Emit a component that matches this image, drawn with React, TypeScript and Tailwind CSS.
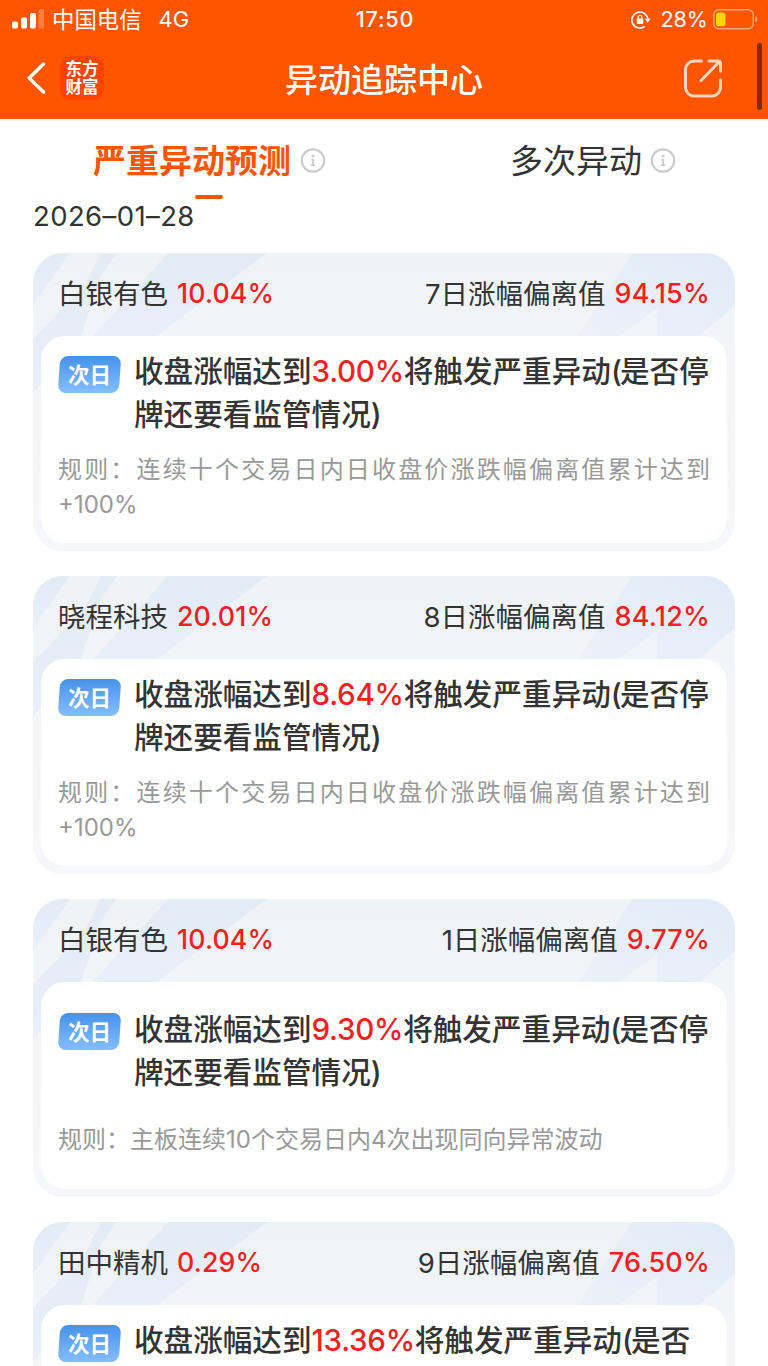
import React from 'react'

interface Alert {
  name: string
  change: string
  days: number
  deviation: string
  trigger: string
  rule: string
  spacious?: boolean
}

const longRule = '规则：连续十个交易日内日收盘价涨跌幅偏离值累计达到+100%'

const alerts: Alert[] = [
  { name: '白银有色', change: '10.04%', days: 7, deviation: '94.15%', trigger: '3.00%', rule: longRule },
  { name: '晓程科技', change: '20.01%', days: 8, deviation: '84.12%', trigger: '8.64%', rule: longRule },
  {
    name: '白银有色',
    change: '10.04%',
    days: 1,
    deviation: '9.77%',
    trigger: '9.30%',
    rule: '规则：主板连续10个交易日内4次出现同向异常波动',
    spacious: true,
  },
  { name: '田中精机', change: '0.29%', days: 9, deviation: '76.50%', trigger: '13.36%', rule: longRule },
]

const StatusBar: React.FC = () => (
  <div className="flex h-[39px] items-center justify-between pl-3 pr-[10px]">
    <div className="flex w-[300px] items-center">
      <svg width="32" height="20" viewBox="0 0 32 20" fill="#fff">
        <rect x="0" y="12.500" width="6" height="7" rx="1.8" />
        <rect x="9" y="8.500" width="6" height="11" rx="1.8" />
        <rect x="18" y="4" width="6" height="15.500" rx="1.8" />
        <rect x="26.500" y="0" width="5.500" height="19.500" rx="1.800" fillOpacity="0.25" />
      </svg>
      <span className="ml-2 text-[22.400px]">中国电信</span>
      <span className="ml-[17px] text-[22px]">4G</span>
    </div>
    <span className="text-[21.500px] font-medium tracking-[0.9px]">17:50</span>
    <div className="flex w-[300px] items-center justify-end">
      <svg width="20" height="18" viewBox="0 0 20 18" fill="none" stroke="#fff" strokeWidth="1.600">
        <path d="M13.600 15.500A8 8 0 1 1 16.800 8" />
        <path d="M13.600 7.800h6l-3 4z" fill="#fff" stroke="none" />
        <rect x="5.800" y="7.600" width="6.400" height="5.400" rx="0.800" fill="#fff" stroke="none" />
        <path d="M7.100 8V6.200a1.900 1.900 0 0 1 3.800 0V8" strokeWidth="1.200" />
      </svg>
      <span className="ml-[9px] text-[21.500px]">28%</span>
      <svg className="ml-[5px]" width="45" height="22" viewBox="0 0 45 22">
        <rect x="0.800" y="0.800" width="39.500" height="19" rx="5" fill="none" stroke="#fff" strokeOpacity="0.45" strokeWidth="1.500" />
        <rect x="3" y="3.500" width="9.500" height="13.800" rx="2.500" fill="#ffd60a" />
        <path d="M42.300 7c2.600 1 2.600 5.600 0 6.600z" fill="#fff" fillOpacity="0.5" />
      </svg>
    </div>
  </div>
)

const TitleBar: React.FC = () => (
  <div className="flex h-[80px] items-center justify-between pb-[2px] pl-[27px] pr-[46px]">
    <div className="flex w-[180px] items-center">
      <svg width="19" height="32" viewBox="0 0 19 32" fill="none" stroke="#fff" strokeWidth="3.400" strokeLinecap="round" strokeLinejoin="round">
        <path d="M16.500 2L2.200 16l14.300 14" />
      </svg>
      <div className="ml-[14px] flex h-11 w-11 flex-col items-center justify-center rounded-[10px] bg-[#ff4400] text-[16.500px] font-bold leading-[18px]">
        <span>东方</span>
        <span>财富</span>
      </div>
    </div>
    <h1 className="pt-[4px] text-[33px] font-medium leading-none">异动追踪中心</h1>
    <div className="flex w-[161px] justify-end">
      <svg width="40" height="40" viewBox="0 0 40 40" fill="none" stroke="#ffd5c2" strokeWidth="3" strokeLinecap="round" strokeLinejoin="round">
        <path d="M19.500 3H12a8.500 8.500 0 0 0-8.500 8.500v18A8.500 8.500 0 0 0 12 38h18a8.500 8.500 0 0 0 8.500-8.500V22" />
        <path d="M27 3h9a2.500 2.500 0 0 1 2.500 2.500V13M37 4L19 22.500" />
      </svg>
    </div>
  </div>
)

const InfoIcon: React.FC = () => (
  <svg width="26" height="26" viewBox="0 0 26 26" fill="none" stroke="#ccc">
    <circle cx="13" cy="13.500" r="11.200" strokeWidth="2.200" />
    <circle cx="13" cy="9" r="1.500" fill="#ccc" stroke="none" />
    <path d="M13 12v6M11 18.200h4M11.500 12.500H13" strokeWidth="1.800" />
  </svg>
)

const CardBackdrop: React.FC = () => (
  <svg className="absolute left-0 top-0" width="702" height="160" viewBox="0 0 702 160">
    <defs>
      <linearGradient id="stripe" x1="0" y1="0" x2="0" y2="1">
        <stop offset="0" stopColor="#e3ebf5" />
        <stop offset="1" stopColor="#e8eff8" />
      </linearGradient>
      <linearGradient id="corner" x1="0" y1="1" x2="1" y2="0">
        <stop offset="0" stopColor="#ecf1f8" />
        <stop offset="1" stopColor="#e1ebf8" />
      </linearGradient>
    </defs>
    <path d="M0 0H37L0 52z" fill="url(#stripe)" />
    <path d="M68 0H84L67 24L48 83L0 140V86L52 32z" fill="url(#stripe)" />
    <path d="M135 0H234L124 83H60z" fill="url(#stripe)" />
    <path d="M599 0H702V52L666 83H624V55L586 83H545z" fill="url(#corner)" />
  </svg>
)

const AlertCard: React.FC<{ alert: Alert }> = ({ alert }) => (
  <section className="relative h-[298px] shrink-0 overflow-hidden rounded-[30px] bg-gradient-to-b from-[#eff3f7] to-[#f6f7fb] px-2 pb-2">
    <CardBackdrop />
    <div className="relative flex h-[83px] items-center justify-between px-[17px] text-[27.500px] text-[#333]">
      <div className="flex items-center">
        <span>{alert.name}</span>
        <span className="mb-[2px] ml-[9px] text-[26.700px] font-medium tracking-[0.150px] text-[#fa1e1e]">{alert.change}</span>
      </div>
      <div className="flex items-center">
        <span>{alert.days}日涨幅偏离值</span>
        <span className="mb-px ml-[9px] text-[27px] font-medium tracking-[0.2px] text-[#fa1e1e]">{alert.deviation}</span>
      </div>
    </div>
    <div className={`relative h-[207px] rounded-[24px] bg-white px-[17px] ${alert.spacious ? 'pt-[26px]' : 'pt-[14px]'}`}>
      <div className="flex">
        <div className={`relative flex h-[37px] w-[63px] shrink-0 items-center justify-center ${alert.spacious ? 'mt-[5px]' : 'mt-[6px]'}`}>
          <div className="absolute inset-x-px inset-y-0 -skew-x-4 rounded-[8px] bg-gradient-to-b from-[#4493e8] to-[#85bdff]" />
          <span className="relative pt-px text-[21.500px] font-bold text-white">次日</span>
        </div>
        <p className="ml-[13px] w-[579px] text-[29.600px] font-medium leading-[42.500px] text-[#333]">
          收盘涨幅达到<span className="tracking-[-0.300px] text-[#fa1e1e]">{alert.trigger}</span>将触发严重异动<span className="tracking-[-1.800px]">(</span>是否停牌还要看监管情况)
        </p>
      </div>
      <p className={`w-[652px] text-justify text-[24px] leading-[35px] text-[#999] ${alert.spacious ? 'mt-[29px]' : 'mt-[17px]'}`}>
        {alert.rule}
      </p>
    </div>
  </section>
)

const App: React.FC = () => (
  <div className="relative flex h-[1366px] w-[768px] flex-col overflow-hidden bg-white font-[Inter,'Noto_Sans_CJK_SC',sans-serif]">
    <header className="h-[119px] shrink-0 bg-[#ff5500] text-white">
      <StatusBar />
      <TitleBar />
    </header>
    <div className="absolute right-[6px] top-[43px] h-[67px] w-[5px] rounded-full bg-[#802b00]" />

    <nav className="flex h-[80px] shrink-0 justify-between pl-[93px] pr-[92px]">
      <div className="flex h-[81px] items-center gap-[9px]">
        <span className="pt-[5px] text-[33px] font-bold text-[#ff5500]">严重异动预测</span>
        <InfoIcon />
      </div>
      <div className="flex h-[81px] items-center gap-[8px]">
        <span className="pt-[5px] text-[33px] text-[#333]">多次异动</span>
        <InfoIcon />
      </div>
    </nav>
    <div className="-mt-1 ml-[195px] h-1 w-7 shrink-0 rounded-full bg-[#ff5500]" />

    <div className="h-[54px] shrink-0 pl-[33px] text-[27.500px] leading-[34px] tracking-[0.400px] text-[#333]">2026–01–28</div>

    <main className="flex flex-col gap-[25px] px-[33px]">
      {alerts.map((alert, index) => (
        <AlertCard key={index} alert={alert} />
      ))}
    </main>
  </div>
)

export default App
